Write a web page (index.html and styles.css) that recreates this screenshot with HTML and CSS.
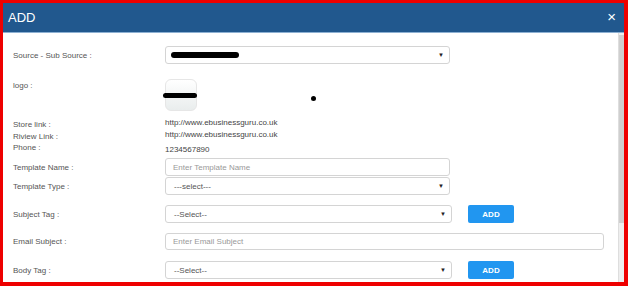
FILE: index.html
```html
<!DOCTYPE html>
<html lang="en">
<head>
    <meta charset="UTF-8">
    <title>ADD</title>
    <link rel="stylesheet" href="styles.css">
</head>
<body>
    <div class="frame">
        <div class="modal-header">
            <span class="modal-title">ADD</span>
            <span class="close">&times;</span>
        </div>
        <div class="modal-body">
            <div class="content">
                <div class="row">
                    <label class="lbl">Source - Sub Source :</label>
                    <div class="select w285"><span class="redact"></span><span class="arrow">&#9660;</span></div>
                </div>

                <div class="row logo-row">
                    <label class="lbl">logo :</label>
                    <div class="logo-box"><span class="redact logo-redact"></span></div>
                    <span class="dot"></span>
                </div>

                <div class="row text-row store">
                    <label class="lbl low">Store link :</label>
                    <span class="val">http://www.ebusinessguru.co.uk</span>
                </div>
                <div class="row text-row">
                    <label class="lbl low">Riview Link :</label>
                    <span class="val">http://www.ebusinessguru.co.uk</span>
                </div>
                <div class="row text-row phone">
                    <label class="lbl high">Phone :</label>
                    <span class="val">1234567890</span>
                </div>

                <div class="row tname">
                    <label class="lbl">Template Name :</label>
                    <input class="input w285" type="text" placeholder="Enter Template Name">
                </div>
                <div class="row ttype">
                    <label class="lbl">Template Type :</label>
                    <div class="select w285"><span>---select---</span><span class="arrow">&#9660;</span></div>
                </div>

                <div class="row gap10">
                    <label class="lbl">Subject Tag :</label>
                    <div class="select w287"><span>--Select--</span><span class="arrow">&#9660;</span></div>
                    <button class="btn">ADD</button>
                </div>
                <div class="row gap10">
                    <label class="lbl">Email Subject :</label>
                    <input class="input wide" type="text" placeholder="Enter Email Subject">
                </div>
                <div class="row gap11">
                    <label class="lbl">Body Tag :</label>
                    <div class="select w287"><span>--Select--</span><span class="arrow">&#9660;</span></div>
                    <button class="btn">ADD</button>
                </div>
            </div>
            <div class="scrollbar"><div class="thumb"></div></div>
        </div>
    </div>
</body>
</html>
```

FILE: styles.css
```css
html, body {
    margin: 0;
    padding: 0;
}

body {
    font-family: "Liberation Sans", Arial, sans-serif;
    background: #fff;
}

.frame {
    width: 628px;
    height: 286px;
    box-sizing: border-box;
    border-style: solid;
    border-color: #ee0000;
    border-width: 3px 4px 4px 3px;
    display: flex;
    flex-direction: column;
    overflow: hidden;
}

.modal-header {
    height: 29px;
    background: #21588e;
    border-bottom: 1px solid #8db0d2;
    display: flex;
    align-items: center;
    justify-content: space-between;
    padding: 0 8px 0 5px;
    color: #fff;
    flex-shrink: 0;
}

.modal-title {
    font-size: 13px;
}

.close {
    font-size: 15px;
    line-height: 1;
    margin-top: -2px;
}

.modal-body {
    flex: 1;
    display: flex;
    min-height: 0;
}

.content {
    flex: 1;
    padding: 13px 0 0 10px;
}

.scrollbar {
    width: 5px;
    background: #eeeeee;
    border-left: 1px solid #dedede;
    padding-top: 2px;
}

.thumb {
    height: 188px;
    background: #cfcfcf;
}

.row {
    display: flex;
    align-items: center;
    font-size: 8px;
}

.lbl {
    width: 152px;
    flex-shrink: 0;
    color: #555;
}

.lbl.low {
    padding-top: 4px;
}

.lbl.high {
    padding-bottom: 4px;
}

.val {
    color: #444;
}

.select,
.input {
    box-sizing: border-box;
    height: 18px;
    border: 1px solid #d4d4d4;
    border-radius: 3px;
    background: #fff;
    font-family: inherit;
    font-size: 8px;
    color: #555;
}

.select {
    display: flex;
    align-items: center;
    justify-content: space-between;
    padding: 0 5px 0 8px;
}

.input {
    padding: 0 7px;
    outline: none;
}

.input::placeholder {
    color: #999;
}

.w285 { width: 285px; }
.w287 { width: 287px; }
.wide { width: 439px; height: 17px; }

.arrow {
    font-size: 6px;
    color: #222;
}

.redact {
    display: block;
    background: #000;
    border-radius: 4px;
}

.select .redact {
    width: 68px;
    height: 6px;
    margin-left: -3px;
}

.logo-row {
    margin-top: 15px;
    align-items: flex-start;
}

.logo-row .lbl {
    padding-top: 2px;
}

.logo-box {
    position: relative;
    width: 32px;
    height: 32px;
    box-sizing: border-box;
    border: 1px solid #e6e6e6;
    border-radius: 6px;
    background: linear-gradient(#ffffff, #e9eded);
}

.logo-redact {
    position: absolute;
    left: -3px;
    top: 13px;
    width: 34px;
    height: 5px;
}

.dot {
    width: 5px;
    height: 5px;
    border-radius: 50%;
    background: #000;
    margin: 17px 0 0 114px;
}

.text-row {
    height: 12px;
}

.store {
    margin-top: 5px;
}

.phone {
    margin-top: 3px;
}

.tname {
    margin-top: 3px;
}

.ttype {
    margin-top: 1px;
}

.gap10 {
    margin-top: 10px;
}

.gap11 {
    margin-top: 11px;
}

.btn {
    margin-left: 16px;
    width: 46px;
    height: 18px;
    border: none;
    border-radius: 2px;
    background: #2196f0;
    color: #fff;
    font-family: inherit;
    font-size: 8px;
    font-weight: bold;
    padding: 0;
}
```
